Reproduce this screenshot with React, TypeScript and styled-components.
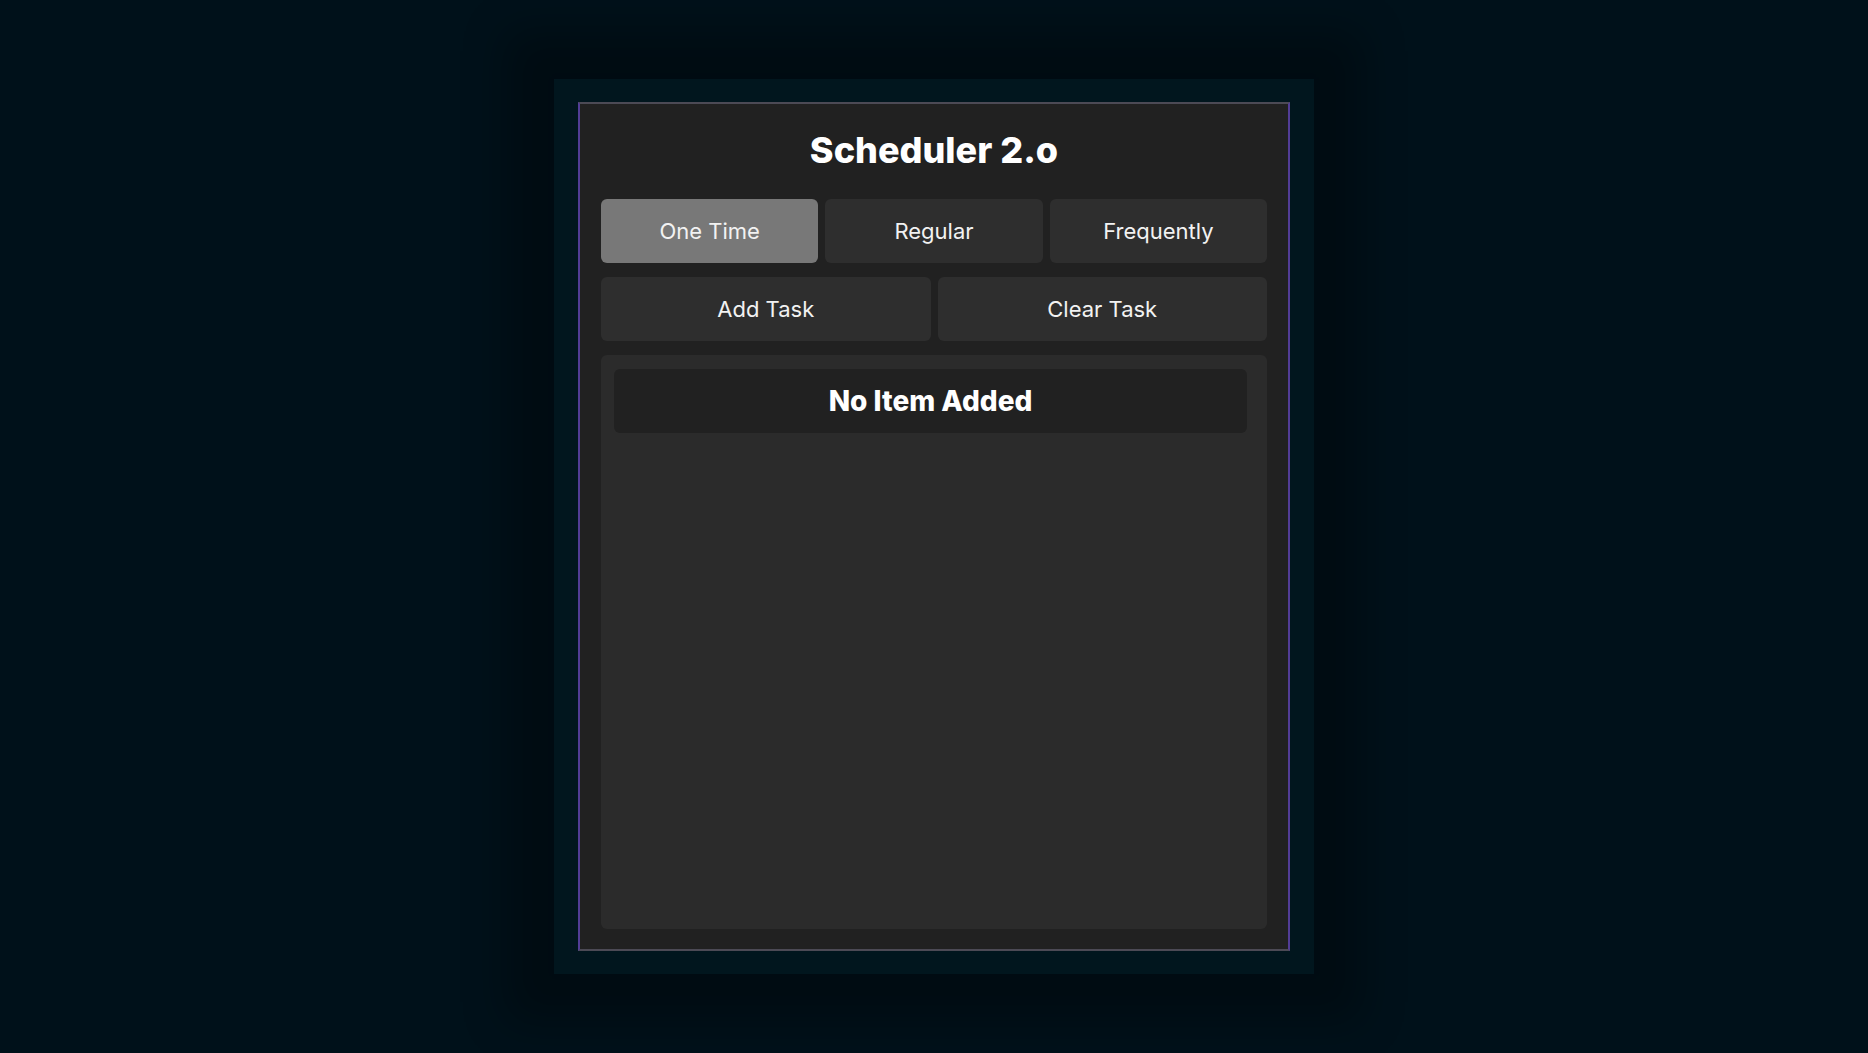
import * as React from "react";
import styled, { createGlobalStyle } from "styled-components";

type Mode = "One Time" | "Regular" | "Frequently";

const MODES: Mode[] = ["One Time", "Regular", "Frequently"];

const GlobalStyle = createGlobalStyle`
  html, body {
    margin: 0;
    padding: 0;
    background: #00111a;
  }
  body {
    font-family: Inter, "Noto Sans", sans-serif;
    color: #f4f4f4;
  }
  * {
    box-sizing: border-box;
  }
`;

export default function App() {
  const [mode, setMode] = React.useState<Mode>("One Time");
  const [tasks, setTasks] = React.useState<string[]>([]);

  return (
    <Page>
      <GlobalStyle />
      <Frame>
        <Card>
          <Title>Scheduler 2.o</Title>
          <ModeRow>
            {MODES.map((m) => (
              <Button key={m} active={m === mode} onClick={() => setMode(m)}>
                {m}
              </Button>
            ))}
          </ModeRow>
          <ActionRow>
            <Button onClick={() => setTasks([...tasks, `${mode} task ${tasks.length + 1}`])}>
              Add Task
            </Button>
            <Button onClick={() => setTasks([])}>Clear Task</Button>
          </ActionRow>
          <TaskList>
            {tasks.length === 0 ? (
              <EmptyItem>No Item Added</EmptyItem>
            ) : (
              tasks.map((t, i) => <TaskItem key={i}>{t}</TaskItem>)
            )}
          </TaskList>
        </Card>
      </Frame>
    </Page>
  );
}

const Page = styled.div`
  min-height: 100vh;
  display: flex;
  align-items: center;
  justify-content: center;
`;

const Frame = styled.div`
  width: 760px;
  height: 895px;
  padding: 23px 24px;
  background: #01161e;
  box-shadow: 0 0 40px 48px rgba(0, 0, 0, 0.3);
`;

const Card = styled.div`
  height: 100%;
  display: flex;
  flex-direction: column;
  padding: 24px 21px 20px;
  background: #212121;
  border-style: solid;
  border-width: 2px;
  border-color: #4c4a55 #523d96 #4c4a55 #523d96;
`;

const Title = styled.h1`
  margin: 0 0 27px;
  font-size: 36px;
  line-height: 44px;
  font-weight: 800;
  text-align: center;
  color: #ffffff;
`;

const ModeRow = styled.div`
  display: grid;
  grid-template-columns: repeat(3, 1fr);
  gap: 7px;
`;

const ActionRow = styled.div`
  display: grid;
  grid-template-columns: repeat(2, 1fr);
  gap: 7px;
  margin-top: 14px;
`;

const Button = styled.button<{ active?: boolean }>`
  height: 64px;
  border: none;
  border-radius: 6px;
  background: ${(p) => (p.active ? "#787878" : "#2e2e2e")};
  color: #f2f2f2;
  font-family: Inter, "Noto Sans", sans-serif;
  font-size: 22px;
  font-weight: 400;
  cursor: pointer;
`;

const TaskList = styled.div`
  flex: 1;
  margin-top: 14px;
  padding: 14px 20px 14px 13px;
  background: #2b2b2b;
  border-radius: 6px;
  display: flex;
  flex-direction: column;
  gap: 10px;
  overflow-y: auto;
`;

const EmptyItem = styled.div`
  height: 64px;
  flex: none;
  display: flex;
  align-items: center;
  justify-content: center;
  background: #212121;
  border-radius: 6px;
  font-size: 28px;
  font-weight: 800;
  color: #ffffff;
`;

const TaskItem = styled(EmptyItem)`
  justify-content: flex-start;
  padding: 0 20px;
  font-size: 20px;
  font-weight: 500;
`;
